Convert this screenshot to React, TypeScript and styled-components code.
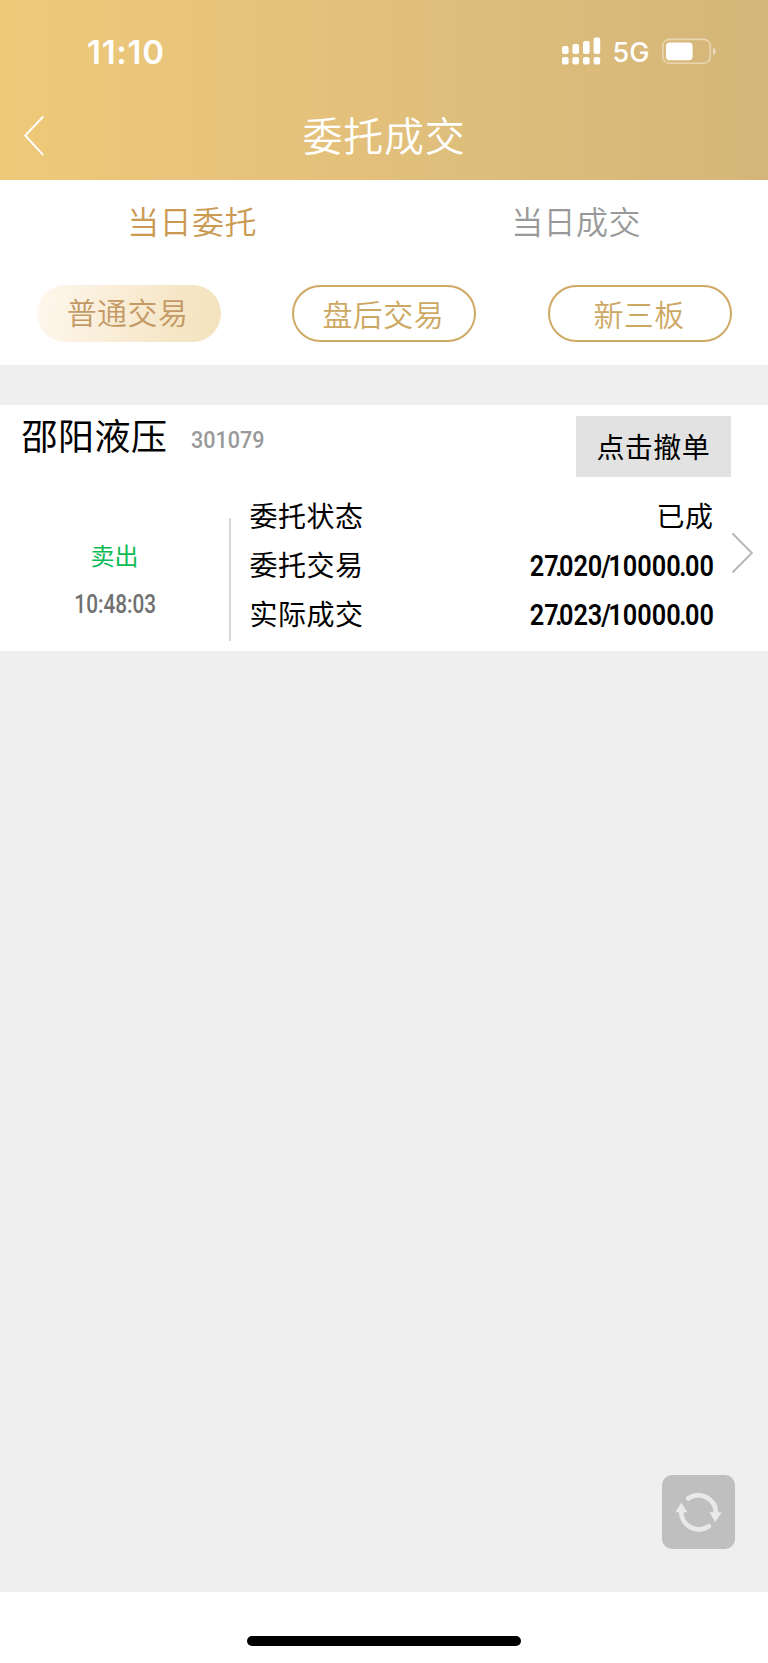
import React from 'react';
import styled, { createGlobalStyle } from 'styled-components';

const GlobalStyle = createGlobalStyle`
  *, *::before, *::after { box-sizing: border-box; }
  body { margin: 0; background: #fff; }
  button { border: 0; padding: 0; background: none; font: inherit; color: inherit; }
`;

const Screen = styled.div`
  position: relative;
  display: flex;
  flex-direction: column;
  width: 768px;
  height: 1663px;
  background: #fff;
  font-family: 'Noto Sans CJK SC', sans-serif;
  font-weight: 400;
  color: #000;
  overflow: hidden;
`;

const Header = styled.header`
  height: 180px;
  flex: none;
  background: linear-gradient(90deg, #eec978 0%, #e9c67a 18%, #e2c07b 50%, #ddbe7b 60%, #d5b67a 100%);
  color: #fff;
`;

const StatusBar = styled.div`
  display: flex;
  align-items: center;
  height: 102px;
  padding: 0 51.5px 0 87px;
  font-family: Inter, sans-serif;
`;

const Clock = styled.span`
  margin: 2px auto 0 0;
  font-size: 33px;
  font-weight: 600;
  letter-spacing: 0.7px;
  line-height: 40px;
`;

const Network = styled.span`
  margin: 3px 13px 0 12px;
  font-size: 27px;
  font-weight: 450;
  line-height: 34px;
  width: 36px;
`;

const TitleBar = styled.div`
  display: grid;
  grid-template-columns: 100px 1fr 100px;
  align-items: center;
  height: 68px;
`;

const BackButton = styled.button`
  display: flex;
  padding-left: 23px;
`;

const Title = styled.h1`
  margin: -4px 0 0;
  text-align: center;
  font-size: 40px;
  font-weight: 350;
  letter-spacing: 0.7px;
  line-height: 60px;
`;

const Tabs = styled.nav`
  display: grid;
  grid-template-columns: 1fr 1fr;
  height: 85px;
  flex: none;
`;

const Tab = styled.button<{ $active?: boolean }>`
  padding-bottom: 6px;
  color: ${(p) => (p.$active ? '#cb9a52' : '#999')};
  font-size: 32px;
  font-weight: 350;
  letter-spacing: 0.4px;
  line-height: 78px;
`;

const Filters = styled.div`
  display: flex;
  justify-content: space-between;
  align-items: flex-start;
  height: 99.5px;
  padding: 20px 36px 0 36.5px;
  flex: none;
`;

const Pill = styled.button<{ $active?: boolean }>`
  width: 184px;
  height: 57px;
  border-radius: 29px;
  border: ${(p) => (p.$active ? '0' : '2px solid #cfaa65')};
  background: ${(p) => (p.$active ? 'linear-gradient(100deg, #fff7ee 0%, #f5e6c6 75%, #f3e3bd 100%)' : '#fff')};
  padding: ${(p) => (p.$active ? '0 2px 4px 0' : '0 2px 0 0')};
  color: ${(p) => (p.$active ? '#c39a66' : '#cda862')};
  font-size: 30px;
  font-weight: 350;
  letter-spacing: 0.4px;
  line-height: 51px;
`;

const Content = styled.main`
  height: 1227.5px;
  flex: none;
  padding-top: 40.5px;
  background: #efefef;
`;

const Card = styled.article`
  height: 246px;
  background: #fff;
`;

const CardHead = styled.div`
  display: flex;
  align-items: flex-start;
  height: 86px;
  padding: 0 37px 0 21.5px;
`;

const StockName = styled.span`
  font-size: 36px;
  letter-spacing: 0.5px;
  line-height: 58px;
`;

const Digits = styled.span<{ $size: number; $weight?: number; $color?: string; $origin?: string; $scale?: number }>`
  display: inline-block;
  font-family: Roboto, sans-serif;
  font-size: ${(p) => p.$size}px;
  font-weight: ${(p) => p.$weight ?? 500};
  letter-spacing: 0;
  color: ${(p) => p.$color ?? 'inherit'};
  transform: scaleX(${(p) => p.$scale ?? 0.88});
  transform-origin: ${(p) => p.$origin ?? 'left'} center;
  white-space: nowrap;
`;

const StockCode = styled(Digits)`
  margin-left: 23px;
  line-height: 69px;
`;

const Time = styled(Digits)`
  margin-left: 1px;
  line-height: 51px;
`;

const Amount = styled(Digits)`
  line-height: 47px;
`;

const CancelButton = styled.button`
  margin: 10.5px 0 0 auto;
  width: 155.5px;
  height: 61.5px;
  background: #e2e2e2;
  font-size: 28px;
  letter-spacing: 0.4px;
  line-height: 61px;
`;

const CardBody = styled.div`
  display: flex;
  height: 160px;
`;

const Side = styled.div`
  width: 229px;
  padding-top: 40px;
  display: flex;
  flex-direction: column;
  align-items: center;
`;

const Direction = styled.span`
  font-size: 24px;
  line-height: 48px;
  color: #0bbb55;
`;

const Divider = styled.i`
  width: 2px;
  height: 123px;
  margin-top: 27px;
  background: #d8d8d8;
`;

const Details = styled.dl`
  width: 464px;
  margin: 0 0 0 18.5px;
  font-size: 28px;
  letter-spacing: 0.5px;
`;

const DetailRow = styled.div`
  display: flex;
  justify-content: space-between;
  height: 49px;
  line-height: 49px;
  dt, dd { margin: 0; }
`;

const Tight = styled.span<{ $by: number }>`
  letter-spacing: -${(p) => p.$by}px;
`;

const Chevron = styled.svg`
  margin: 41px 0 0 17px;
`;

const RefreshButton = styled.button`
  position: absolute;
  left: 661.5px;
  top: 1475px;
  width: 73.5px;
  height: 74px;
  border-radius: 10px;
  background: #bfbfbf;
`;

const HomeArea = styled.footer`
  flex: 1;
  display: flex;
  justify-content: center;
  align-items: flex-end;
  padding-bottom: 17px;
`;

const HomeIndicator = styled.div`
  width: 274px;
  height: 10px;
  border-radius: 5px;
  background: #000;
`;

function Signal() {
  const bars = [
    [0, 9, 8],
    [10.4, 7, 10],
    [21, 4, 13],
    [31.6, 0.5, 16.5],
  ];
  return (
    <svg width="39" height="28" viewBox="0 0 39 28" fill="#fff">
      {bars.map(([x, y, h]) => (
        <g key={x}>
          <rect x={x} y={y} width="6.6" height={h} rx="2" />
          <rect x={x} y="20" width="6.6" height="7.5" rx="2" />
        </g>
      ))}
    </svg>
  );
}

function Battery() {
  return (
    <svg width="55" height="27" viewBox="0 0 55 27">
      <rect x="0.9" y="1.4" width="47.4" height="23.8" rx="6.5" fill="none" stroke="#fff" strokeOpacity=".42" strokeWidth="1.6" />
      <rect x="4" y="4.6" width="26.6" height="17.6" rx="3.6" fill="#fff" />
      <path d="M51 9.4c1.7.8 2.7 2.2 2.7 3.9s-1 3.1-2.7 3.9z" fill="#fff" fillOpacity=".5" />
    </svg>
  );
}

const details = [
  { label: '委托状态', text: '已成' },
  { label: '委托交易', fraction: ['02', '0'] },
  { label: '实际成交', fraction: ['02', '3'] },
];

export default function App() {
  return (
    <Screen>
      <GlobalStyle />
      <Header>
        <StatusBar>
          <Clock>11:10</Clock>
          <Signal />
          <Network>5G</Network>
          <Battery />
        </StatusBar>
        <TitleBar>
          <BackButton aria-label="返回">
            <svg width="22" height="42" viewBox="0 0 22 42" fill="none" stroke="#fff" strokeWidth="1.9">
              <path d="M20.3 1.5 2.2 20.5l18.1 19.7" />
            </svg>
          </BackButton>
          <Title>委托成交</Title>
        </TitleBar>
      </Header>
      <Tabs>
        <Tab $active>当日委托</Tab>
        <Tab>当日成交</Tab>
      </Tabs>
      <Filters>
        <Pill $active>普通交易</Pill>
        <Pill>盘后交易</Pill>
        <Pill>新三板</Pill>
      </Filters>
      <Content>
        <Card>
          <CardHead>
            <StockName>邵阳液压</StockName>
            <StockCode $size={24.5} $color="#999">301079</StockCode>
            <CancelButton>点击撤单</CancelButton>
          </CardHead>
          <CardBody>
            <Side>
              <Direction>卖出</Direction>
              <Time $size={25} $color="#707070" $origin="center" $scale={0.83}>10:48:03</Time>
            </Side>
            <Divider />
            <Details>
              {details.map((d) => (
                <DetailRow key={d.label}>
                  <dt>{d.label}</dt>
                  <dd>
                    {d.fraction ? (
                      <Amount $size={29} $weight={600} $origin="right" $scale={0.873}>
                        2<Tight $by={4}>7.</Tight>{d.fraction[0]}<Tight $by={1.2}>{d.fraction[1]}</Tight>
                        <Tight $by={3}>/</Tight>1000<Tight $by={1.6}>0.</Tight>00
                      </Amount>
                    ) : (
                      d.text
                    )}
                  </dd>
                </DetailRow>
              ))}
            </Details>
            <Chevron width="23" height="42" viewBox="0 0 23 42" fill="none" stroke="#b5b5b5" strokeWidth="1.8">
              <path d="m1.5 1.5 19.4 19.5L1.5 40.5" />
            </Chevron>
          </CardBody>
        </Card>
      </Content>
      <HomeArea>
        <HomeIndicator />
      </HomeArea>
      <RefreshButton aria-label="刷新">
        <svg width="73.5" height="74" viewBox="0.7 0 73.5 74">
          <g fill="none" stroke="#e9e9e9" strokeWidth="4.8" strokeLinecap="round">
            <path d="M27 23.4A17.6 17.6 0 0 1 54.6 38" />
            <path d="M47.5 51.3A17.6 17.6 0 0 1 20 36" />
          </g>
          <path d="M48 37.2h12.4L54 47.2zM14 37.2h12.2L20 27.6z" fill="#e9e9e9" />
        </svg>
      </RefreshButton>
    </Screen>
  );
}
